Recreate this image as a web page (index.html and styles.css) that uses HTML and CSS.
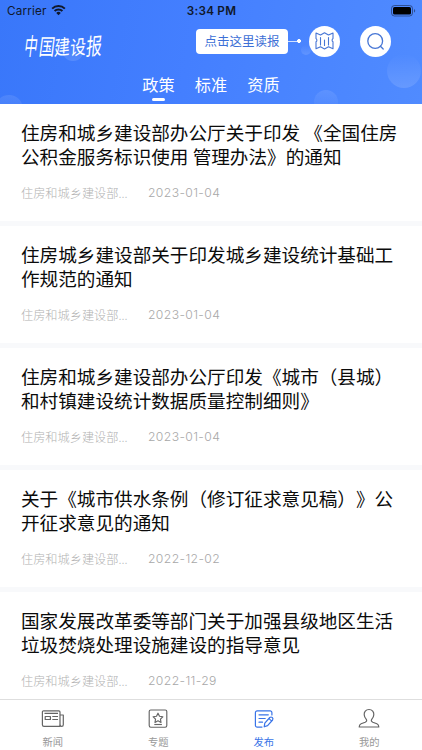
FILE: index.html
```html
<!DOCTYPE html>
<html lang="zh-CN">
<head>
<meta charset="utf-8">
<meta name="viewport" content="width=device-width, initial-scale=1">
<title>中国建设报</title>
<link rel="stylesheet" href="styles.css">
</head>
<body>
<div class="app">
  <header class="header">
    <svg class="bubbles" viewBox="0 0 422 104" aria-hidden="true">
      <defs>
        <linearGradient id="bubble" x1="0" y1="0" x2="0" y2="1"><stop offset="0" stop-color="#fff" stop-opacity="0"/><stop offset="1" stop-color="#fff" stop-opacity=".13"/></linearGradient>
        <linearGradient id="bubbleTop" x1="0" y1="0" x2="0" y2="1"><stop offset="0" stop-color="#fff" stop-opacity=".1"/><stop offset="1" stop-color="#fff" stop-opacity="0"/></linearGradient>
      </defs>
      <circle cx="73" cy="50" r="11" fill="url(#bubble)"/>
      <circle cx="306" cy="50" r="5" fill="url(#bubble)"/>
      <circle cx="404" cy="71" r="17" fill="url(#bubble)"/>
      <circle cx="326" cy="102" r="12" fill="url(#bubbleTop)"/>
      <circle cx="9" cy="109" r="14" fill="url(#bubbleTop)"/>
    </svg>
    <div class="status">
      <div class="carrier">Carrier
        <svg class="wifi" viewBox="0 0 16 12"><g fill="none" stroke="#10182b" stroke-width="2.1"><path d="M1.2 4.5a9.6 9.6 0 0 1 13.6 0"/><path d="M3.8 7.1a6 6 0 0 1 8.4 0"/></g><path d="M5.6 9.1a3.4 3.4 0 0 1 4.8 0L8 11.5z" fill="#10182b"/></svg>
      </div>
      <div class="time">3:34 PM</div>
      <svg class="battery" viewBox="0 0 25 12"><rect x=".5" y=".5" width="21" height="10.5" rx="3" fill="none" stroke="#10182b" stroke-opacity=".5"/><rect x="2" y="2" width="18" height="7.5" rx="1.6" fill="#000"/><path d="M23 4v3.6c1.6-.5 1.6-3.1 0-3.6" fill="#10182b" fill-opacity=".5"/></svg>
    </div>
    <div class="brand-row">
      <h1 class="logo"><span class="l1">中</span><span class="l2">国</span><span class="l3">建</span><span class="l4">设</span><span class="l5">报</span></h1>
      <div class="actions">
        <div class="tip">点击这里读报</div>
        <span class="connector"></span>
        <button class="round map" aria-label="读报"><svg viewBox="0 0 31 31"><g fill="none" stroke="#4776d5" stroke-width="1.1" stroke-linejoin="round" stroke-linecap="round"><path d="M7 7l4.500 2 4-2.300 4 2.300 4.500-2v5.500c-1.200.8-1.200 2.500 0 3.300v7l-4.500-2-4 2.200-4-2.200-4.500 2v-7c1.200-.8 1.200-2.500 0-3.300z"/><path d="M11.500 11.500v7.500M15.500 14v5.500M19.500 11.500v7.500"/></g></svg></button>
        <button class="round" aria-label="搜索"><svg viewBox="0 0 31 31"><g fill="none" stroke="#4776d5" stroke-width="1.3" stroke-linecap="round"><circle cx="15.2" cy="15" r="7.4"/><path d="M20.4 20.2l2.8 2.8"/></g></svg></button>
      </div>
    </div>
    <nav class="tabs"><span class="tab active">政策</span><span class="tab">标准</span><span class="tab">资质</span></nav>
  </header>

  <main class="list">
    <article class="card"><h2>住房和城乡建设部办公厅关于印发 《全国住房<br>公积金服务标识使用 管理办法》的通知</h2><p class="meta"><span class="source">住房和城乡建设部...</span><time>2023-01-04</time></p></article>
    <article class="card"><h2>住房城乡建设部关于印发城乡建设统计基础工<br>作规范的通知</h2><p class="meta"><span class="source">住房和城乡建设部...</span><time>2023-01-04</time></p></article>
    <article class="card"><h2>住房和城乡建设部办公厅印发《城市（县城）<br>和村镇建设统计数据质量控制细则》</h2><p class="meta"><span class="source">住房和城乡建设部...</span><time>2023-01-04</time></p></article>
    <article class="card"><h2>关于《城市供水条例（修订征求意见稿）》公<br>开征求意见的通知</h2><p class="meta"><span class="source">住房和城乡建设部...</span><time>2022-12-02</time></p></article>
    <article class="card"><h2>国家发展改革委等部门关于加强县级地区生活<br>垃圾焚烧处理设施建设的指导意见</h2><p class="meta"><span class="source">住房和城乡建设部...</span><time>2022-11-29</time></p></article>
  </main>

  <nav class="bottom">
    <a class="item"><svg viewBox="0 0 24 22"><g fill="none" stroke="#656565" stroke-width="1.2" stroke-linejoin="round"><path d="M19 18.4H3a1.6 1.6 0 0 1-1.6-1.6V4A1.2 1.2 0 0 1 2.600 2.800H17.800A1.200 1.200 0 0 1 19 4z"/><path d="M19 7h3.300v9.800a1.600 1.600 0 0 1-3.300 0M3.500 5.300h13.500"/><rect x="4.200" y="8.500" width="5.200" height="3"/><path d="M11.300 8.500H17M11.300 11.500H17"/></g></svg><span>新闻</span></a>
    <a class="item"><svg viewBox="0 0 24 22"><g fill="none" stroke="#656565" stroke-width="1.150" stroke-linejoin="round"><rect x="3.200" y="2" width="17.600" height="17.200" rx="1.600"/><path d="M12 5.200l1.500 3.050 3.350.5-2.400 2.350.55 3.350L12 12.850 9 14.450l.55-3.350-2.400-2.350 3.350-.5z"/><path d="M8.300 16.500h7.600"/></g></svg><span>专题</span></a>
    <a class="item current"><svg viewBox="0 0 24 22"><g fill="none" stroke="#3974e8" stroke-width="1.200" stroke-linecap="round" stroke-linejoin="round"><path d="M19.900 7V4.700A1.800 1.800 0 0 0 18.100 2.900H5.200A1.800 1.800 0 0 0 3.400 4.700V17.300a1.800 1.800 0 0 0 1.800 1.800H10"/><path d="M7 6.800h9.300M7 10.500h6.200M7 14.200h3.500"/><path d="M12.200 18.800l.6-3.700 5-5.600a1.900 1.900 0 0 1 2.800 2.500l-5 5.600zM17 10.600l2.500 2.300"/></g></svg><span>发布</span></a>
    <a class="item"><svg viewBox="0 0 24 22"><path d="M12 1.500c-3.300 0-5 2.400-4.800 5.200.1 2.100 1 3.500 2.100 4.700.8 1.300.3 2.200-1.100 2.800l-4.100 1.600c-1.400.6-1.900 1.500-1.900 3.200h19.600c0-1.700-.5-2.600-1.900-3.200l-4.100-1.600c-1.400-.6-1.900-1.500-1.100-2.800 1.100-1.200 2-2.600 2.100-4.700.2-2.800-1.500-5.200-4.800-5.200z" fill="none" stroke="#656565" stroke-width="1.200" stroke-linejoin="round"/></svg><span>我的</span></a>
  </nav>
</div>
</body>
</html>
```
FILE: styles.css
```css
* { box-sizing: border-box; }
body { margin: 0; background: #fff; font-family: "Noto Sans CJK SC", sans-serif; text-spacing-trim: space-all; }
.app { width: 422px; height: 750px; display: flex; flex-direction: column; overflow: hidden; }
.header { position: relative; flex: none; height: 104px; background: linear-gradient(100deg, #3977fa, #447fff 45%, #508bff); color: #fff; }
.bubbles { position: absolute; inset: 0; width: 422px; height: 104px; }
.status { position: relative; height: 22px; display: grid; grid-template-columns: 1fr auto 1fr; align-items: center; padding: 0 6px 0 7px; color: #10182b; font: 500 11.700px/22px Inter, sans-serif; }
.carrier { display: flex; align-items: center; gap: 4px; font-weight: 400; letter-spacing: .2px; }
.wifi { width: 15px; height: 12px; margin-top: -2px; }
.time { font-weight: 600; letter-spacing: .25px; }
.battery { width: 25px; height: 12px; justify-self: end; margin-top: -1px; }
.brand-row { position: relative; height: 48px; display: flex; justify-content: space-between; padding: 0 31px 0 23px; }
.logo { margin: 8px 0 0; display: flex; height: 32px; font: 400 16.500px/32px "Noto Sans CJK SC", sans-serif; transform: skewX(-7deg); }
.logo span { display: block; width: 15.700px; transform: scale(.95, 1.350); }
.logo .l1 { transform: translateY(-1px) scale(.8, 1.450); }
.logo .l3 { transform: scale(.95, 1.250) rotate(-5deg); }
.logo .l4 { transform: scale(.95, 1.200) rotate(-5deg); }
.logo .l5 { transform: translateY(-1px) scale(.95, 1.400) rotate(-3deg); }
.actions { display: flex; align-items: center; height: 38px; }
.tip { width: 92px; height: 25px; border-radius: 4px; background: #fff; color: #3d70d6; font-size: 12.500px; line-height: 24px; text-align: center; white-space: nowrap; }
.connector { width: 13px; height: 4px; margin-right: 8px; background: radial-gradient(circle at 11px 2px, #fff 1.700px, transparent 2.200px), linear-gradient(#d2e1ff, #d2e1ff) 0 1.500px / 12px 1px no-repeat; }
.round { width: 31px; height: 31px; padding: 0; border: 0; border-radius: 50%; background: #fff; }
.round svg { display: block; width: 31px; height: 31px; }
.map { margin-right: 20px; }
.tabs { position: relative; display: flex; justify-content: center; gap: 20px; height: 34px; font-size: 16.200px; line-height: 29px; }
.tab { width: 32.500px; white-space: nowrap; }
.active::after { content: ""; display: block; width: 13px; height: 3px; margin: -1px auto 0; border-radius: 2px; background: #fff; }
.list { flex: 1; min-height: 0; overflow: hidden; }
.card { height: 122px; padding: 16px 0 0 21px; border-bottom: 5px solid #f8f9fb; }
.card h2 { margin: 0; color: #0b0b0b; font-size: 18.620px; font-weight: 400; line-height: 24px; white-space: nowrap; }
.meta { display: flex; margin: 16px 0 0; color: #b2b2b2; font-size: 12.200px; font-weight: 300; line-height: 18px; }
.source { width: 127px; }
.meta time { font-family: Inter, sans-serif; font-weight: 300; font-size: 12.200px; letter-spacing: .38px; color: #a8a8a8; }
.bottom { flex: none; height: 51px; border-top: 1px solid #dedede; display: grid; grid-template-columns: repeat(4, 1fr); background: #fff; }
.item { display: flex; flex-direction: column; align-items: center; padding-top: 8px; color: #999; font-size: 10.300px; line-height: 14px; }
.item svg { width: 24px; height: 22px; margin-bottom: 5px; }
.current { color: #3974e8; }
```
